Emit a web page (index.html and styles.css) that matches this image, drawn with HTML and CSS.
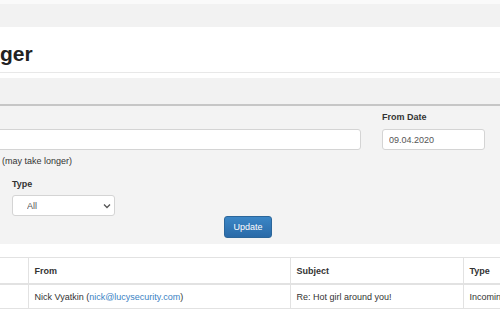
FILE: index.html
```html
<!DOCTYPE html>
<html lang="en">
<head>
  <meta charset="UTF-8" />
  <meta name="viewport" content="width=device-width, initial-scale=1.0"/>
  <title>Mail Logger</title>
  <link rel="stylesheet" href="styles.css">
</head>
<body>

  <div class="page">
    <div class="topbar"></div>

    <div class="title">
      <h1>ger</h1>
    </div>

    <div class="tabs"></div>

    <form class="filters" id="filterForm">
      <div class="row">
        <div class="field search">
          <input type="text" id="search" name="search" aria-label="Search">
        </div>
        <div class="field date">
          <label for="fromDate">From Date</label>
          <input type="text" id="fromDate" name="fromDate" value="09.04.2020">
        </div>
      </div>

      <p class="hint">(may take longer)</p>

      <div class="field type">
        <label for="type">Type</label>
        <div class="select-wrap">
          <select id="type" name="type">
            <option>All</option>
            <option>Incoming</option>
            <option>Outgoing</option>
          </select>
          <svg class="chevron" width="8" height="6" viewBox="0 0 8 6"><path d="M1 1.5 L4 4.5 L7 1.5" fill="none" stroke="#555" stroke-width="1.3"/></svg>
        </div>
      </div>

      <div class="actions">
        <button type="submit">Update</button>
      </div>
    </form>

    <table class="messages">
      <colgroup>
        <col class="c-first">
        <col class="c-from">
        <col class="c-subject">
        <col class="c-type">
      </colgroup>
      <thead>
        <tr>
          <th></th>
          <th>From</th>
          <th>Subject</th>
          <th>Type</th>
        </tr>
      </thead>
      <tbody>
        <tr>
          <td></td>
          <td>Nick Vyatkin (<a href="#">nick@lucysecurity.com</a>)</td>
          <td>Re: Hot girl around you!</td>
          <td>Incoming</td>
        </tr>
      </tbody>
    </table>
  </div>

</body>
</html>
```

FILE: styles.css
```css
body {
  margin: 0;
  overflow: hidden;
  background-color: white;
  font-family: "Liberation Sans", Arial, sans-serif;
  font-size: 9px;
  color: #333;
}
.page {
  width: 500px;
}
.topbar {
  height: 23px;
  border-top: 4px solid #fafafa;
  background-color: #f2f2f2;
}
.title {
  height: 45px;
  border-bottom: 1px solid #e8e8e8;
}
h1 {
  margin: 0;
  padding: 14px 0 0 0;
  font-size: 21px;
  line-height: 26px;
  font-weight: bold;
  color: #222;
}
.tabs {
  height: 26px;
  margin-top: 5px;
  background-color: #f2f2f2;
  border-bottom: 2px solid #c6c6c6;
}
.filters {
  background-color: #f3f3f3;
  padding: 6px 0;
}
.row {
  display: flex;
  align-items: flex-end;
  gap: 21px;
  margin-left: -10px;
}
.field label {
  display: block;
  font-weight: bold;
  line-height: 11px;
  margin-bottom: 6px;
}
.field input, .field select {
  box-sizing: border-box;
  height: 21px;
  padding: 0 6px;
  border: 1px solid #d4d4d4;
  border-radius: 3px;
  background-color: white;
  font-family: inherit;
  font-size: 9px;
  color: #555;
}
.search input {
  width: 371px;
}
.date input {
  width: 103px;
}
.hint {
  margin: 6px 0 0 2px;
  line-height: 11px;
}
.type {
  margin: 12px 0 0 12px;
}
.type label {
  margin-bottom: 5px;
}
.select-wrap {
  position: relative;
  width: 103px;
}
.type select {
  width: 103px;
  padding-left: 14px;
  appearance: none;
  -webkit-appearance: none;
}
.chevron {
  position: absolute;
  right: 4px;
  top: 8px;
}
.actions {
  text-align: center;
  padding-right: 4px;
}
button {
  height: 22px;
  padding: 0 8px;
  border: 1px solid #2b669a;
  border-radius: 3px;
  background: linear-gradient(to bottom, #3b86c6, #2a6aa8);
  color: white;
  font-family: inherit;
  font-size: 9px;
  cursor: pointer;
}
.messages {
  width: 796px;
  margin-top: 13px;
  border-collapse: collapse;
  table-layout: fixed;
}
.c-first { width: 28px; }
.c-from { width: 262px; }
.c-subject { width: 173px; }
.messages th, .messages td {
  text-align: left;
  padding: 0 6px;
  border: 1px solid #e2e2e2;
  white-space: nowrap;
  overflow: hidden;
}
.messages th:first-child, .messages td:first-child {
  border-left: none;
}
.messages th {
  height: 25px;
  border-bottom-width: 2px;
}
.messages td {
  height: 23px;
}
.messages a {
  color: #3a83c4;
  text-decoration: none;
}
```
